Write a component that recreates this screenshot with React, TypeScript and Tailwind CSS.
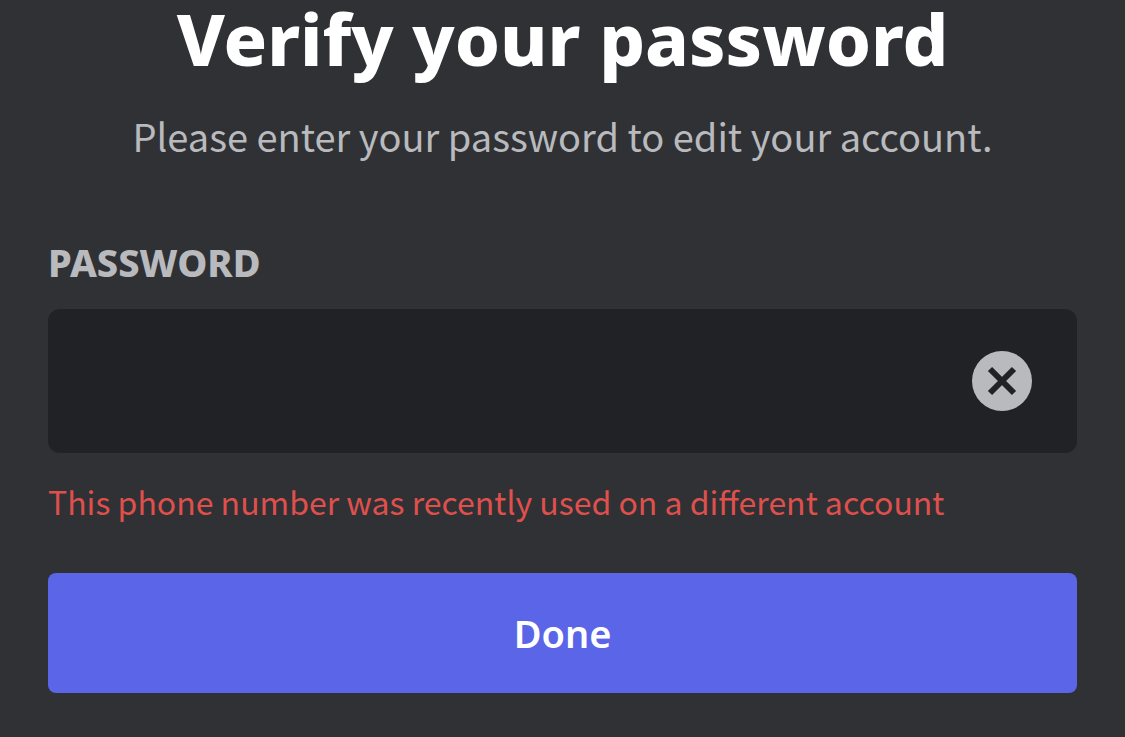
import { useState } from 'react';
import type { FormEvent } from 'react';

interface ClearButtonProps {
  onClick: () => void;
}
function ClearButton({ onClick }: ClearButtonProps) {
  return (
    <button type="button" onClick={onClick} aria-label="Clear password" className="shrink-0 rounded-full">
      <svg viewBox="0 0 60 60" className="size-15" aria-hidden="true">
        <circle cx="30" cy="30" r="30" fill="#b9babd" />
        <path d="M18 18 L42 42 M42 18 L18 42" stroke="#202225" strokeWidth="6" fill="none" />
      </svg>
    </button>
  );
}

export default function VerifyPasswordPage() {
  const [password, setPassword] = useState('');

  const handleSubmit = (e: FormEvent) => {
    e.preventDefault();
  };

  return (
    <main className="min-h-screen bg-[#303135] px-12 pb-11 font-['Noto_Sans_CJK_SC','Noto_Sans',sans-serif]">
      <h1 className="text-center font-['Noto_Sans',sans-serif] text-[72px] leading-19 font-extrabold text-white">
        Verify your password
      </h1>
      <p className="mt-8 text-center text-[38px] leading-14 text-[#b9babd]">
        Please enter your password to edit your account.
      </p>

      <form onSubmit={handleSubmit}>
        <label
          htmlFor="password"
          className="mt-18 block font-['Noto_Sans',sans-serif] text-[38px] leading-13 font-extrabold text-[#b9babd] uppercase"
        >
          Password
        </label>
        <div className="mt-[21px] flex h-36 items-center rounded-xl bg-[#202225] pr-[45px] pl-8">
          <input
            id="password"
            type="password"
            value={password}
            onChange={(e) => setPassword(e.target.value)}
            aria-describedby="password-error"
            className="h-full min-w-0 flex-1 bg-transparent text-[38px] text-white outline-none"
          />
          <ClearButton onClick={() => setPassword('')} />
        </div>
        <p id="password-error" className="mt-6 text-[32px] leading-12 text-[#df504d]">
          This phone number was recently used on a different account
        </p>
        <button
          type="submit"
          className="mt-12 h-30 w-full rounded-lg bg-[#5a65e8] font-['Noto_Sans',sans-serif] text-[38px] font-semibold text-white"
        >
          Done
        </button>
      </form>
    </main>
  );
}
